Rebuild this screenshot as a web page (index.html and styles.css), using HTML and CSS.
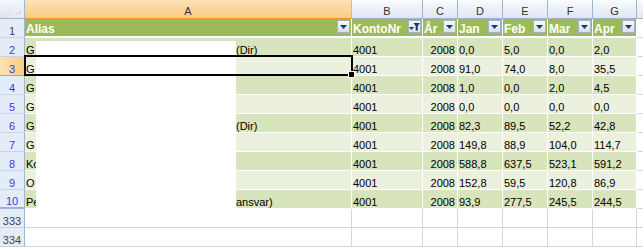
FILE: index.html
```html
<!DOCTYPE html>
<html lang="no">
<head>
    <meta charset="UTF-8">
    <title>Konto 4001 - 2008</title>
    <link rel="stylesheet" href="styles.css">
</head>
<body>
    <div class="sheet">
        <div class="row colheads">
            <div class="corner">
                <svg width="12" height="12" viewBox="0 0 12 12"><path d="M11 1V11H1z" fill="#dbe3ee" stroke="#f8fafd" stroke-width="1"/></svg>
            </div>
            <div class="active">A</div>
            <div>B</div>
            <div>C</div>
            <div>D</div>
            <div>E</div>
            <div>F</div>
            <div>G</div>
            <div></div>
        </div>

        <div class="row thead">
            <div class="rowhead plain">1</div>
            <div class="t">Alias <span class="drop"><svg width="7" height="4" viewBox="0 0 7 4"><path d="M0 0H7L3.5 4z"/></svg></span></div>
            <div class="t">KontoNr <span class="drop"><svg width="11" height="9" viewBox="0 0 11 9"><path d="M0 5H5L2.5 8z"/><path d="M4.5 1H11L8.8 4V8.5H6.7V4z"/></svg></span></div>
            <div class="t">År <span class="drop"><svg width="7" height="4" viewBox="0 0 7 4"><path d="M0 0H7L3.5 4z"/></svg></span></div>
            <div class="t">Jan <span class="drop"><svg width="7" height="4" viewBox="0 0 7 4"><path d="M0 0H7L3.5 4z"/></svg></span></div>
            <div class="t">Feb <span class="drop"><svg width="7" height="4" viewBox="0 0 7 4"><path d="M0 0H7L3.5 4z"/></svg></span></div>
            <div class="t">Mar <span class="drop"><svg width="7" height="4" viewBox="0 0 7 4"><path d="M0 0H7L3.5 4z"/></svg></span></div>
            <div class="t">Apr <span class="drop"><svg width="7" height="4" viewBox="0 0 7 4"><path d="M0 0H7L3.5 4z"/></svg></span></div>
            <div></div>
        </div>

        <div class="row dark">
            <div class="rowhead">2</div>
            <div class="t"><span class="lead">G</span>(Dir)</div>
            <div class="t">4001</div>
            <div class="t num">2008</div>
            <div class="t">0,0</div>
            <div class="t">5,0</div>
            <div class="t">0,0</div>
            <div class="t">2,0</div>
            <div></div>
        </div>
        <div class="row light">
            <div class="rowhead current">3</div>
            <div class="t"><span class="lead">G</span></div>
            <div class="t">4001</div>
            <div class="t num">2008</div>
            <div class="t">91,0</div>
            <div class="t">74,0</div>
            <div class="t">8,0</div>
            <div class="t">35,5</div>
            <div></div>
        </div>
        <div class="row dark">
            <div class="rowhead">4</div>
            <div class="t"><span class="lead">G</span></div>
            <div class="t">4001</div>
            <div class="t num">2008</div>
            <div class="t">1,0</div>
            <div class="t">0,0</div>
            <div class="t">2,0</div>
            <div class="t">4,5</div>
            <div></div>
        </div>
        <div class="row light">
            <div class="rowhead">5</div>
            <div class="t"><span class="lead">G</span></div>
            <div class="t">4001</div>
            <div class="t num">2008</div>
            <div class="t">0,0</div>
            <div class="t">0,0</div>
            <div class="t">0,0</div>
            <div class="t">0,0</div>
            <div></div>
        </div>
        <div class="row dark">
            <div class="rowhead">6</div>
            <div class="t"><span class="lead">G</span>(Dir)</div>
            <div class="t">4001</div>
            <div class="t num">2008</div>
            <div class="t">82,3</div>
            <div class="t">89,5</div>
            <div class="t">52,2</div>
            <div class="t">42,8</div>
            <div></div>
        </div>
        <div class="row light">
            <div class="rowhead">7</div>
            <div class="t"><span class="lead">G</span></div>
            <div class="t">4001</div>
            <div class="t num">2008</div>
            <div class="t">149,8</div>
            <div class="t">88,9</div>
            <div class="t">104,0</div>
            <div class="t">114,7</div>
            <div></div>
        </div>
        <div class="row dark">
            <div class="rowhead">8</div>
            <div class="t"><span class="lead">Ko</span></div>
            <div class="t">4001</div>
            <div class="t num">2008</div>
            <div class="t">588,8</div>
            <div class="t">637,5</div>
            <div class="t">523,1</div>
            <div class="t">591,2</div>
            <div></div>
        </div>
        <div class="row light">
            <div class="rowhead">9</div>
            <div class="t"><span class="lead">O</span></div>
            <div class="t">4001</div>
            <div class="t num">2008</div>
            <div class="t">152,8</div>
            <div class="t">59,5</div>
            <div class="t">120,8</div>
            <div class="t">86,9</div>
            <div></div>
        </div>
        <div class="row dark">
            <div class="rowhead hidden-after">10</div>
            <div class="t"><span class="lead">Pe</span>ansvar)</div>
            <div class="t">4001</div>
            <div class="t num">2008</div>
            <div class="t">93,9</div>
            <div class="t">277,5</div>
            <div class="t">245,5</div>
            <div class="t">244,5</div>
            <div></div>
        </div>

        <div class="row">
            <div class="rowhead plain">333</div>
            <div></div><div></div><div></div><div></div><div></div><div></div><div></div><div></div>
        </div>
        <div class="row">
            <div class="rowhead plain">334</div>
            <div></div><div></div><div></div><div></div><div></div><div></div><div></div><div></div>
        </div>

        <!-- names blanked out in the original -->
        <div class="redact"></div>
        <div class="cursor"></div>
    </div>
</body>
</html>
```

FILE: styles.css
```css
body { margin: 0; font-family: "Liberation Sans", Arial, sans-serif; font-size: 11px; color: #000; overflow: hidden; }
.sheet { position: relative; width: 643px; height: 248px; overflow: hidden; background: #fff; }

.row { display: grid; grid-template-columns: 25px 327px 71px 35px 45px 45px 45px 44px 80px; height: 19px; }
.row > div { box-sizing: border-box; display: flex; align-items: flex-end; padding-left: 1px; line-height: 12px; white-space: nowrap; overflow: hidden; border-right: 1px solid #d0d7e5; border-bottom: 1px solid #d0d7e5; }

/* column letters */
.colheads > div { justify-content: center; padding: 0 0 1px; color: #333; background: linear-gradient(#f9fbfd, #dfe7f2); border-color: #9eb6ce; }
.colheads > .active { background: linear-gradient(#fde3b4, #f8cb83); border-bottom-color: #f29536; border-right-color: #f2b366; }
.colheads > .corner { align-items: flex-end; justify-content: flex-end; padding: 0 1px 1px 0; background: linear-gradient(#f4f7fb, #dde5f0); }
.corner svg { display: block; }

/* row numbers */
.row > .rowhead { justify-content: center; padding-left: 0; color: #3838e8; background: #e4ecf7; border-right-color: #9eb6ce; border-bottom-color: #c7d4e6; }
.row > .rowhead.plain { color: #444; }
.row > .rowhead.current { background: linear-gradient(to right, #fde3b4, #f8cb83); border-bottom-color: #f29536; border-right-color: #f29536; }
.row > .rowhead.hidden-after { border-bottom: 2px solid #9eb6ce; }

/* table */
.row > .t { border-right-color: #fff; border-bottom-color: #fff; }
.dark > .t { background: #d8e4bc; }
.light > .t { background: #ebf1de; }
.row > .num { justify-content: flex-end; padding-right: 2px; }
.lead { flex: none; width: 210px; overflow: hidden; }

.thead > .t { justify-content: space-between; padding-bottom: 1px; font-size: 12px; font-weight: bold; color: #fff; background: #9bbb59; border-bottom: 2px solid #fff; }
.drop { align-self: flex-start; flex: none; box-sizing: border-box; width: 13px; height: 13px; margin: 1px 1px 0 0; display: flex; align-items: center; justify-content: center; background: linear-gradient(#f6f8fb, #d8e0eb); border: 1px solid #a7b3c4; }
.drop svg { display: block; fill: #22385e; }

.redact { position: absolute; left: 36px; top: 41px; width: 200px; height: 168px; background: #fff; }
.cursor { position: absolute; left: 24px; top: 55px; width: 329px; height: 21px; box-sizing: border-box; border: 2px solid #000; }
.cursor::after { content: ""; position: absolute; right: -4px; bottom: -4px; width: 5px; height: 5px; background: #000; border: 1px solid #fff; }
```
